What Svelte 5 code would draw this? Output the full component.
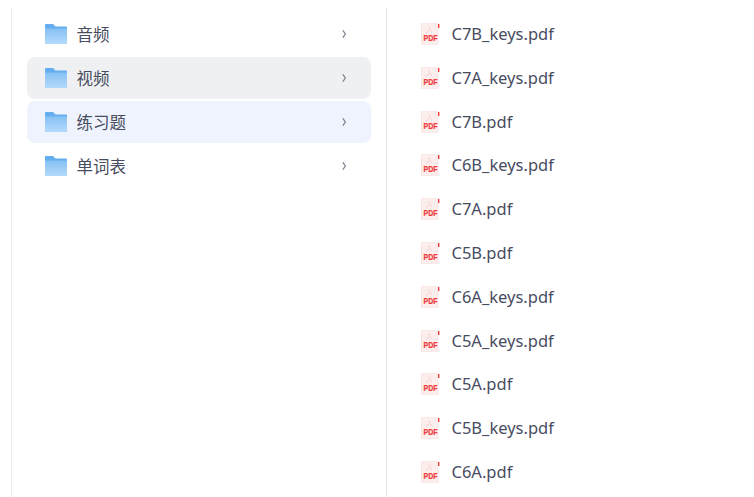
<script>
  const folders = [
    { name: '音频', cls: '' },
    { name: '视频', cls: 'hover' },
    { name: '练习题', cls: 'active' },
    { name: '单词表', cls: '' }
  ];
  const files = ['C7B_keys.pdf','C7A_keys.pdf','C7B.pdf','C6B_keys.pdf','C7A.pdf','C5B.pdf','C6A_keys.pdf','C5A_keys.pdf','C5A.pdf','C5B_keys.pdf','C6A.pdf'];
</script>

<div class="page">
  <div class="left">
    {#each folders as f}
      <div class="folder {f.cls}">
        <svg class="ficon" width="22" height="20" viewBox="0 0 22 20">
          <defs>
            <linearGradient id="fg" x1="0" y1="0" x2="0" y2="1">
              <stop offset="0" stop-color="#86c1f5"/>
              <stop offset="1" stop-color="#b3dafb"/>
            </linearGradient>
          </defs>
          <path d="M1 0h7l2.500 2.500H21a1 1 0 0 1 1 1V19a1 1 0 0 1-1 1H1a1 1 0 0 1-1-1V1a1 1 0 0 1 1-1z" fill="#64adee"/>
          <path d="M0 4.500h21a1 1 0 0 1 1 1V19a1 1 0 0 1-1 1H1a1 1 0 0 1-1-1z" fill="url(#fg)"/>
        </svg>
        <span class="fname ftext">{f.name}</span>
        <svg class="chev" width="6" height="10" viewBox="0 0 6 10"><path d="M1.800 1.300l2.600 3.700-2.600 3.700" fill="none" stroke="#7b7e8b" stroke-width="1.200"/></svg>
      </div>
    {/each}
  </div>
  <div class="right">
    {#each files as name}
      <div class="file">
        <div class="picon">
          <svg width="19" height="22" viewBox="0 0 19 22">
            <path d="M1.500 0h15.500v21a1 1 0 0 1-1 1H1.500a1 1 0 0 1-1-1V1a1 1 0 0 1 1-1z" fill="#fdeeee"/>
            <path d="M0.500 1a1 1 0 0 1 1-1H17v22H1.500a1 1 0 0 1-1-1z" fill="none" stroke="#f8dfdf" stroke-width="0.800"/>
            <path d="M8 3.500c.6 2.500 1.200 4 3 5.200M8 7c-.8 1.200-1.800 2-3.200 2.500" fill="none" stroke="#f5c6c6" stroke-width="0.900"/>
            <rect x="17" y="1" width="1.400" height="4" fill="#ee3b3b"/>
          </svg>
          <span class="pdf">PDF</span>
        </div>
        <span class="fname">{name}</span>
      </div>
    {/each}
  </div>
</div>

<style>
  :global(body) { margin: 0; background: #fff; }
  .page {
    width: 754px;
    height: 497px;
    overflow: hidden;
    display: flex;
    background: #fff;
    font-family: "Noto Sans", "Noto Sans CJK SC", sans-serif;
    color: #484c60;
    box-sizing: border-box;
    padding-top: 8px;
  }
  .left {
    margin-left: 11px;
    width: 376px;
    box-sizing: border-box;
    border-left: 1px solid #ececec;
    border-right: 1px solid #e5e5e5;
    padding: 5px 15px 0 15px;
    display: flex;
    flex-direction: column;
    gap: 2px;
  }
  .folder {
    height: 42px;
    flex: none;
    display: flex;
    align-items: center;
    border-radius: 8px;
    padding-left: 18px;
    padding-right: 24px;
  }
  .hover { background: #eff0f2; }
  .active { background: #eef3fe; }
  .ficon { flex: none; margin-right: 10px; }
  .chev { flex: none; margin-left: auto; }
  .fname { font-size: 16.500px; line-height: 22px; white-space: nowrap; }
  .ftext { padding-top: 1px; margin-left: -0.500px; }
  .right {
    padding: 4.200px 0 0 34px;
    display: flex;
    flex-direction: column;
  }
  .file {
    height: 43.800px;
    flex: none;
    display: flex;
    align-items: center;
    gap: 11.500px;
  }
  .picon {
    flex: none;
    position: relative;
    width: 19px;
    height: 22px;
  }
  .picon svg { display: block; }
  .pdf {
    position: absolute;
    left: 2.500px;
    bottom: 2px;
    width: 13px;
    text-align: center;
    font-family: "Liberation Sans", sans-serif;
    font-size: 7px;
    line-height: 8px;
    font-weight: 700;
    color: #ee3b3b;
    transform: scaleY(1.200);
    transform-origin: center bottom;
    -webkit-text-stroke: 0.200px #ee3b3b;
  }
</style>
